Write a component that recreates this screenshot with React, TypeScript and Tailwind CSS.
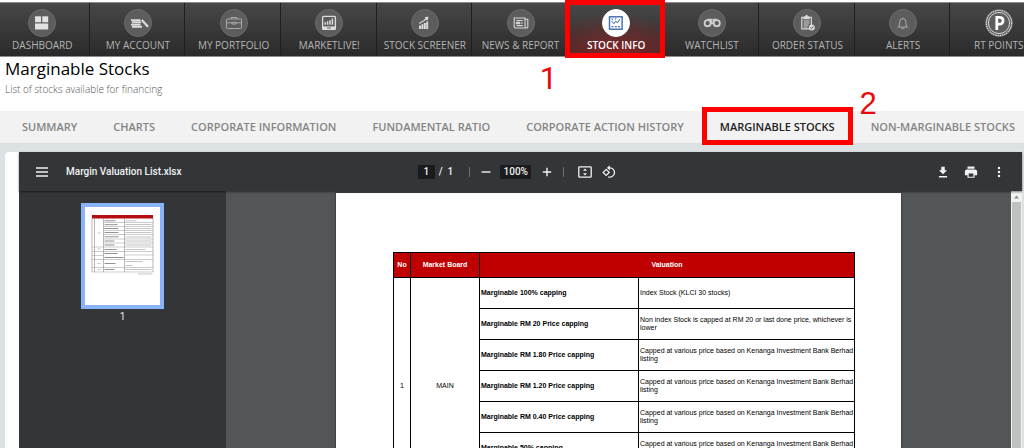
import { useState } from "react";
import type { ReactNode } from "react";

interface MenuItem {
  label: string;
  icon: ReactNode;
}

interface ValuationRow {
  name: string;
  detail: string;
}

const menu: MenuItem[] = [
  {
    label: "DASHBOARD",
    icon: (
      <g fill="#e2e2e2">
        <rect x="7" y="7.3" width="6" height="6" />
        <rect x="14.2" y="7.3" width="6" height="6" />
        <rect x="7" y="14.5" width="13.2" height="6" />
      </g>
    ),
  },
  {
    label: "MY ACCOUNT",
    icon: (
      <g stroke="#dcdcdc" fill="none">
        <path d="M7 11.2h9.5M8 13.4h9M7 15.6h9.5M8 17.700h10" strokeWidth="1.900" />
        <path d="M17.8 11l6.200 6.800" strokeWidth="2.300" />
      </g>
    ),
  },
  {
    label: "MY PORTFOLIO",
    icon: (
      <g stroke="#a9a9a9" fill="none" strokeWidth="1">
        <rect x="6.5" y="10" width="15" height="9.5" rx="0.8" />
        <path d="M11 10V8.5h6V10M6.5 13.8h5.500M16 13.8h5.500M12 13.300h4v1.700h-4z" />
      </g>
    ),
  },
  {
    label: "MARKETLIVE!",
    icon: (
      <g>
        <rect x="7.6" y="7.4" width="12.8" height="13" rx="1" fill="none" stroke="#dedede" strokeWidth="1.3" />
        <path d="M7.6 17.4h12.8v3H7.6z" fill="#dedede" />
        <path d="M10.2 15.8v-2.6M12.6 15.8v-3.6M15 15.8v-4.6M17.4 15.8V9.6" stroke="#dedede" strokeWidth="1.5" />
        <path d="M12 19h4" stroke="#666" strokeWidth="1" />
      </g>
    ),
  },
  {
    label: "STOCK SCREENER",
    icon: (
      <g stroke="#dedede" fill="none">
        <path d="M9 20v-3.5M11.4 20v-4.8M13.8 20v-6M16.2 20v-7.4" strokeWidth="1.9" />
        <path d="M8.2 14.4l4.6-2.6 3.6-2.8M14 8.6l2.8-.2-.6 2.8" strokeWidth="1.1" />
      </g>
    ),
  },
  {
    label: "NEWS & REPORT",
    icon: (
      <g stroke="#d6d6d6" fill="none" strokeWidth="1.1">
        <path d="M18 9H7.2v8.8c0 .8.5 1.2 1.2 1.2h11c.8 0 1.4-.5 1.4-1.3v-7.5H18zM18 9v8.6c0 .8.5 1.4 1.2 1.4" />
        <path d="M9.5 11.5h6.3M9.5 16.6h6.3M13.4 14h2.6" />
        <path d="M9.4 13.2h3v1.6h-3z" fill="#d6d6d6" />
      </g>
    ),
  },
  {
    label: "STOCK INFO",
    icon: (
      <g stroke="#3f68ae" fill="none">
        <rect x="7.5" y="7.8" width="12.6" height="12.4" strokeWidth="1.4" />
        <path d="M9.6 12l2.2 2.8 2-2.8 1.6 2 2.6-4" strokeWidth="1" />
        <path d="M9.5 17.6h2M12.8 17.6h2M16 17.6h2M9.6 10.2h1.4M13 9.8h1.2" strokeWidth="1.3" />
      </g>
    ),
  },
  {
    label: "WATCHLIST",
    icon: (
      <g stroke="#cfcfcf" fill="none">
        <circle cx="9.6" cy="14.2" r="3" strokeWidth="1.8" />
        <circle cx="18.8" cy="14.2" r="3" strokeWidth="1.8" />
        <path d="M9.6 10.6h3.6v4h2v-4h3.6" strokeWidth="1.5" />
      </g>
    ),
  },
  {
    label: "ORDER STATUS",
    icon: (
      <g>
        <path d="M8.8 8.4h2v1.2h5.4V8.4h2.2v11.4H8.8z" fill="none" stroke="#d8d8d8" strokeWidth="1.2" />
        <path d="M11 9.4V7.2h1.4c0-2 2.4-2 2.4 0h1.4v2.2z" fill="#d8d8d8" />
        <path d="M10.6 12h6M10.6 14h6M10.6 16h5M10.6 18h4" stroke="#d8d8d8" strokeWidth="1" />
        <circle cx="18.8" cy="18.6" r="3" fill="#d8d8d8" />
        <path d="M17.4 18.6l1.1 1.1 1.9-2.2" fill="none" stroke="#555" strokeWidth="0.9" />
      </g>
    ),
  },
  {
    label: "ALERTS",
    icon: (
      <g stroke="#a3a3a3" fill="none" strokeWidth="1.1">
        <path d="M9.4 18c1-1 1.3-2 1.3-4.6 0-2 1.2-3.6 3.1-3.6s3.1 1.6 3.1 3.6c0 2.6.3 3.6 1.3 4.6z" />
        <path d="M12.4 18.2c0 2 2.8 2 2.8 0M13.8 9.8V8.4" />
      </g>
    ),
  },
  {
    label: "RT POINTS",
    icon: (
      <g fill="none">
        <circle cx="14" cy="14" r="12.6" stroke="#e6e6e6" strokeWidth="1.2" strokeDasharray="1.4 0.8" />
        <circle cx="14" cy="14" r="10.6" stroke="#d8d8d8" strokeWidth="1" />
        <path d="M11.8 21V8.4h2.8c4.6 0 4.6 6.8 0 6.8h-2.8" stroke="#fff" strokeWidth="2.8" />
      </g>
    ),
  },
];

const tabs: string[] = [
  "SUMMARY",
  "CHARTS",
  "CORPORATE INFORMATION",
  "FUNDAMENTAL RATIO",
  "CORPORATE ACTION HISTORY",
  "MARGINABLE STOCKS",
  "NON-MARGINABLE STOCKS",
];

const capped = "Capped at various price based on Kenanga Investment Bank Berhad listing";

const rows: ValuationRow[] = [
  { name: "Marginable 100% capping", detail: "Index Stock (KLCI 30 stocks)" },
  {
    name: "Marginable RM 20 Price capping",
    detail: "Non index Stock is capped at RM 20 or last done price, whichever is lower",
  },
  { name: "Marginable RM 1.80 Price capping", detail: capped },
  { name: "Marginable RM 1.20 Price capping", detail: capped },
  { name: "Marginable RM 0.40 Price capping", detail: capped },
  { name: "Marginable 50% capping", detail: capped },
  { name: "", detail: "" },
];

const MainMenu = () => {
  return (
    <nav className="mt-0.5 h-[55px] shrink-0 border-y border-[#8c8c8c] bg-linear-to-b from-[#484848] to-[#2a2a2a]">
      <ul className="-ml-1.5 -mr-[22px] flex h-full">
        {menu.map((item) => {
          const active = item.label === "STOCK INFO";
          return (
            <li
              key={item.label}
              className={`relative min-w-0 flex-1 border-r border-[#1f1f1f] ${active
                ? "bg-[radial-gradient(90%_80%_at_50%_100%,#8e2426,transparent)]"
                : ""
                }`}
            >
              <a href="#" className="flex h-full flex-col items-center pl-0.5 pt-1.5">
                <svg viewBox="0 0 28 28" className="size-7">
                  <circle
                    cx="14"
                    cy="14"
                    r="13.5"
                    fill={active ? "#fff" : "#5d5d5d"}
                    stroke={active ? "#fff" : "#6c6c6c"}
                  />
                  {item.icon}
                </svg>
                <span
                  className={`whitespace-nowrap text-[10px] leading-4 ${active
                    ? "font-semibold text-white"
                    : "text-[#b4b4b4]"
                    }`}
                >
                  {item.label}
                </span>
              </a>
              {active && (
                <>
                  <span className="pointer-events-none absolute -inset-x-[3px] -top-[3px] -bottom-0.5 z-10 border-5 border-[#fe0000]" />
                  <span className="absolute -left-7 top-[60px] font-[Roboto,sans-serif] text-[31px] leading-8 text-[#e8090c]">
                    1
                  </span>
                </>
              )}
            </li>
          );
        })}
      </ul>
    </nav>
  );
};

const TabBar = () => {
  return (
    <nav className="flex h-8 shrink-0 bg-[#f2f2f2] pl-1">
      {tabs.map((tab) => {
        const active = tab === "MARGINABLE STOCKS";
        return (
          <div key={tab} className="relative shrink-0">
            <a
              href="#"
              className={`block whitespace-nowrap px-[18px] text-[11px] font-semibold leading-8 ${active
                ? "text-[#222]"
                : "text-[#858585]"
                }`}
            >
              {tab}
            </a>
            {active && (
              <>
                <span className="pointer-events-none absolute inset-x-0 -top-1 -bottom-0.5 z-10 border-5 border-[#fe0000]" />
                <span className="absolute -right-6 -top-[23px] font-['Liberation_Sans',sans-serif] text-[31px] leading-8 text-[#e8090c]">
                  2
                </span>
              </>
            )}
          </div>
        );
      })}
    </nav>
  );
};

const Toolbar = () => {
  const [page, setPage] = useState("1");
  const [zoom, setZoom] = useState("100%");

  return (
    <div className="z-10 flex h-[39px] shrink-0 items-center bg-[#323639] font-[Roboto,sans-serif] text-[10px] font-medium text-[#f1f1f1] shadow-[0_1px_2px_rgba(0,0,0,0.5)]">
      <div className="flex flex-1 items-center gap-[18px] pl-[17px]">
        <button aria-label="Menu">
          <svg viewBox="0 0 12 10" className="h-2.5 w-3" stroke="currentColor" strokeWidth="1.4">
            <path d="M0 1h12M0 5h12M0 9h12" />
          </svg>
        </button>
        <span className="whitespace-nowrap">Margin Valuation List.xlsx</span>
      </div>

      <div className="flex items-center pr-2">
        <input
          aria-label="Page"
          value={page}
          onChange={(e) => setPage(e.target.value)}
          className="h-3.5 w-[17px] bg-[#191b1c] text-center"
        />
        <span className="ml-1 whitespace-pre">{"/  1"}</span>
        <span className="ml-4 h-2.5 w-px bg-[#6d7073]" />
        <button aria-label="Zoom out" className="ml-2.5">
          <svg viewBox="0 0 12 12" className="size-3" stroke="currentColor" strokeWidth="1.4">
            <path d="M1.5 6h9" />
          </svg>
        </button>
        <input
          aria-label="Zoom"
          value={zoom}
          onChange={(e) => setZoom(e.target.value)}
          className="ml-2 h-3.5 w-[31px] bg-[#191b1c] text-center"
        />
        <button aria-label="Zoom in" className="ml-2.5">
          <svg viewBox="0 0 12 12" className="size-3" stroke="currentColor" strokeWidth="1.4">
            <path d="M1.8 6h8.4M6 1.8v8.4" />
          </svg>
        </button>
        <span className="ml-2.5 h-2.5 w-px bg-[#6d7073]" />
        <button aria-label="Fit to page" className="ml-3.5">
          <svg viewBox="0 0 14 14" className="size-3.5" fill="none" stroke="currentColor">
            <rect x="0.8" y="1.8" width="12.4" height="10.4" rx="0.8" strokeWidth="1.3" />
            <path d="M7 3.6l2 2.2H5zM7 10.4l2-2.2H5z" fill="currentColor" stroke="none" />
          </svg>
        </button>
        <button aria-label="Rotate" className="ml-2.5">
          <svg viewBox="0 0 14 14" className="size-3.5" fill="none" stroke="currentColor" strokeWidth="1.3">
            <path d="M1.2 7.4l3-3 3 3-3 3z" />
            <path d="M6.2 2.8h1.4a4.7 4.7 0 1 1-1.4 9.1" />
            <path d="M7.8 0.2v5.2L5 2.8z" fill="currentColor" stroke="none" />
          </svg>
        </button>
      </div>

      <div className="flex flex-1 items-center justify-end gap-3.5 pr-4">
        <button aria-label="Download">
          <svg viewBox="0 0 24 24" className="size-3.5" fill="currentColor">
            <path d="M19 9h-4V3H9v6H5l7 7zM5 19v2.500h14V19z" />
          </svg>
        </button>
        <button aria-label="Print">
          <svg viewBox="0 0 24 24" className="size-3.5" fill="currentColor">
            <path d="M19 7.5H5c-2 0-3.5 1.5-3.5 3.5v6.5H6V22h12v-4.500h4.500V11c0-2-1.500-3.500-3.500-3.500zM16 20H8v-5.500h8zM18 2.500H6v4h12z" />
          </svg>
        </button>
        <button aria-label="More">
          <svg viewBox="0 0 24 24" className="size-3.5" fill="currentColor">
            <circle cx="12" cy="5" r="2.1" />
            <circle cx="12" cy="12" r="2.1" />
            <circle cx="12" cy="19" r="2.1" />
          </svg>
        </button>
      </div>
    </div>
  );
};

const Thumbnail = () => {
  return (
    <button className="flex flex-col items-center font-[Roboto,sans-serif] text-[10px] text-[#e8e8e8]">
      <svg viewBox="0 0 75 98" className="box-content h-[98px] w-[75px] border-4 border-[#8ab4f8] bg-white" fill="none">
        <path d="M7 8h61v3.600H7z" fill="#b40d12" />
        <path d="M7 11v54M9.500 11v54M18.500 11v54M39.500 11v54M68 11v54" stroke="#888" strokeWidth="0.6" />
        <path
          d="M18.500 15.500h49.500M18.500 19.500h49.500M18.500 23.500h49.500M18.500 27.500h49.500M18.500 32h49.500M18.500 36h49.500M7 40h61M7 44.500h61M7 48.500h12M39.500 48h28.500M7 52.500h61M7 60.500h61M7 65h61"
          stroke="#999"
          strokeWidth="0.5"
        />
        <path
          d="M19.500 13.800h11M19.500 17.700h13M19.500 21.500h14M19.500 25.500h14M19.500 29.800h14M19.500 34h10M19.500 38h10M19.500 42.500h12M19.500 46.500h13M19.500 50.500h19M19.500 56.500h11M19.500 62.500h10"
          stroke="#777"
          strokeWidth="0.8"
        />
        <path
          d="M40.500 13.800h11M40.500 17.500h26M40.500 21.500h26M40.500 25.500h26M40.500 30h26M40.500 34h26M40.500 38h26M40.500 42.500h20M40.500 54.500h17M40.500 58.500h7M40.500 62.500h26M53 67h14M12.500 26h3M12.500 42h3M12.500 56.500h3M12.500 62.500h3"
          stroke="#aaa"
          strokeWidth="0.7"
        />
      </svg>
      <span>1</span>
    </button>
  );
};

const ValuationTable = () => {
  return (
    <table className="w-[462px] table-fixed border-collapse text-[7px] leading-2 text-black">
      <colgroup>
        <col className="w-[17px]" />
        <col className="w-[69px]" />
        <col className="w-[159px]" />
        <col />
      </colgroup>
      <thead>
        <tr className="h-[25px] bg-[#c00000] text-white">
          <th className="border border-black p-0">No</th>
          <th className="border border-black p-0">Market Board</th>
          <th colSpan={2} className="border border-black p-0">
            Valuation
          </th>
        </tr>
      </thead>
      <tbody>
        {rows.map((row, index) => (
          <tr key={index} className="h-[31px]">
            {index === 0 && (
              <>
                <td rowSpan={rows.length} className="border border-black p-0 text-center">
                  1
                </td>
                <td rowSpan={rows.length} className="border border-black p-0 text-center">
                  MAIN
                </td>
              </>
            )}
            <td className="border border-black py-0 pl-px pr-0 font-bold">{row.name}</td>
            <td className="border border-black py-0 pl-px pr-0">{row.detail}</td>
          </tr>
        ))}
      </tbody>
    </table>
  );
};

const App = () => {
  return (
    <div className="flex h-screen flex-col overflow-hidden bg-white font-['Open_Sans',sans-serif]">
      <MainMenu />

      <header className="shrink-0 px-[5px] pb-3.5">
        <h1 className="text-[17px] font-medium leading-6 text-black">Marginable Stocks</h1>
        <p className="text-[10px] font-light leading-4 text-[#555]">
          List of stocks available for financing
        </p>
      </header>

      <TabBar />

      <main className="flex min-h-0 flex-1 bg-[#dce1e4] pl-[5px] pr-0.5 pt-[9px]">
        <div className="flex min-w-0 flex-1 rounded-tl-sm bg-white pl-3.5">
          <section className="flex min-w-0 flex-1 flex-col">
            <Toolbar />
            <div className="flex min-h-0 flex-1">
              <aside className="flex w-[207px] shrink-0 justify-center overflow-hidden bg-[#323639] pt-3">
                <div>
                  <Thumbnail />
                </div>
              </aside>
              <div className="min-w-0 flex-1 overflow-hidden bg-[#525659]">
                <div className="mx-auto mt-0.5 w-[565px] bg-white pb-24 pl-[57px] pt-[59px] font-['Liberation_Sans',sans-serif] shadow-[0_0_2px_rgba(0,0,0,0.6)]">
                  <ValuationTable />
                </div>
              </div>
              <div className="flex w-[11px] shrink-0 flex-col items-center bg-[#f1f1f1]">
                <svg viewBox="0 0 11 11" className="size-[11px]" fill="#8b8b8b">
                  <path d="M5.500 4.500l2.500 3H3z" />
                </svg>
                <div className="w-[9px] flex-1 bg-[#c1c1c1]" />
              </div>
            </div>
          </section>
        </div>
      </main>
    </div>
  );
};

export default App;
